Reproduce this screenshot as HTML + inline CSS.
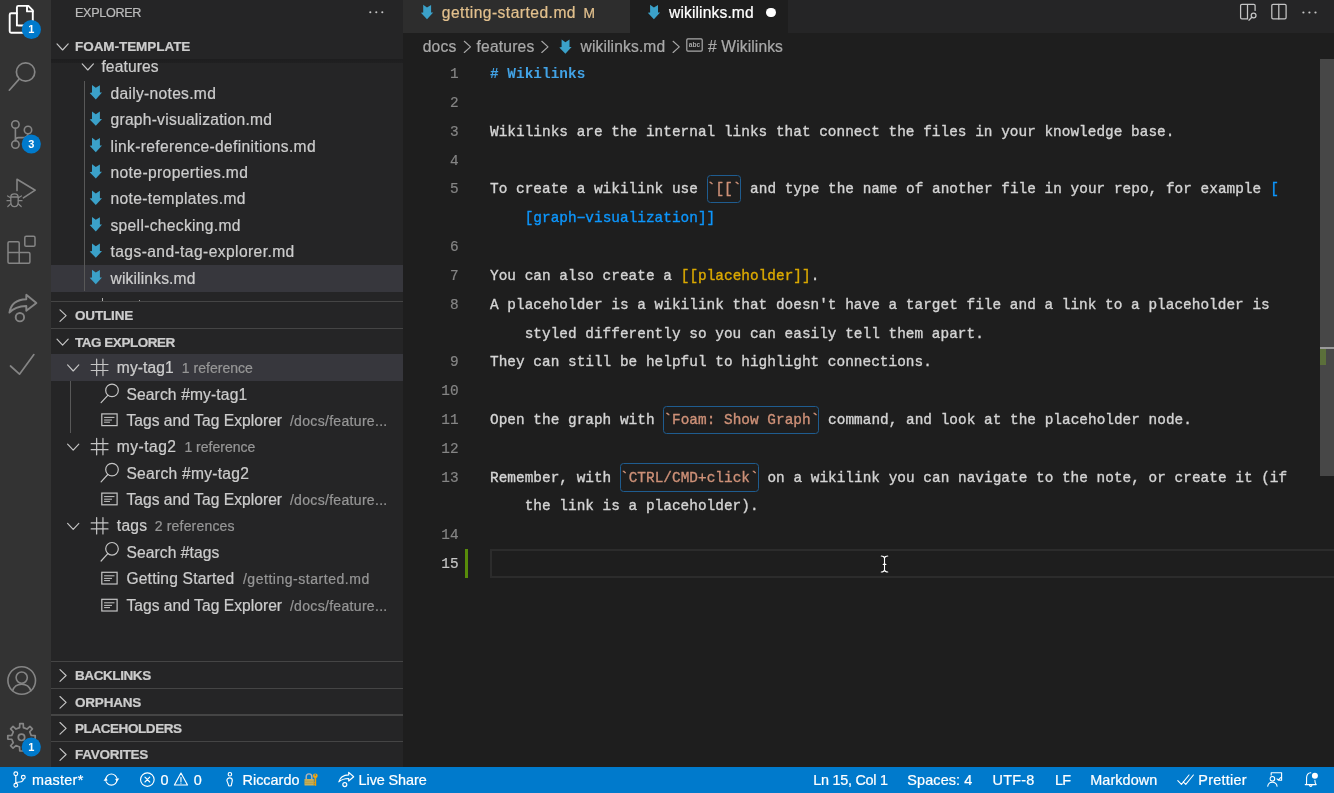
<!DOCTYPE html>
<html><head><meta charset="utf-8"><title>wikilinks.md - foam-template</title>
<style>
html,body{margin:0;padding:0;background:#1e1e1e;}
body{width:1334px;height:793px;overflow:hidden;position:relative;font-family:"Liberation Sans",sans-serif;}
.r{position:absolute;}
.t{position:absolute;white-space:pre;-webkit-text-stroke:0.22px currentColor;}
.ln{position:absolute;left:420px;width:38.6px;text-align:right;font:400 14.4px/28.8px "Liberation Mono",monospace;white-space:pre;-webkit-text-stroke:0.2px currentColor;}
.cl{position:absolute;font:400 14.4px/28.8px "Liberation Mono",monospace;white-space:pre;letter-spacing:0.0276px;-webkit-text-stroke:0.35px currentColor;}
#clipA{position:absolute;left:51px;top:59px;width:352px;height:242.2px;overflow:hidden;}
#tx{position:absolute;left:0;top:0;width:1334px;height:793px;will-change:transform;}
svg{position:absolute;left:0;top:0;overflow:visible;}
</style></head>
<body>
<div class="r" style="left:0px;top:0px;width:51px;height:767px;background:#333333;"></div>
<div class="r" style="left:51px;top:0px;width:352px;height:767px;background:#252526;"></div>
<div class="r" style="left:403px;top:0px;width:931px;height:32.6px;background:#252526;"></div>
<div class="r" style="left:403px;top:32.6px;width:931px;height:734.4px;background:#1e1e1e;"></div>
<div class="r" style="left:0px;top:766.8px;width:1334px;height:26.2px;background:#007acc;"></div>
<div class="r" style="left:51px;top:265.4px;width:352px;height:26.4px;background:#37373d;"></div>
<div class="r" style="left:84px;top:80.6px;width:1px;height:210.6px;background:#585858;"></div>
<div class="r" style="left:51px;top:32.6px;width:352px;height:26.4px;background:#252526;"></div>
<div class="r" style="left:51px;top:59px;width:352px;height:3.7px;background:linear-gradient(#1e1e1f,#202021);"></div>
<div class="r" style="left:102.2px;top:298.3px;width:1.2px;height:3px;background:#b0b0b0;"></div>
<div class="r" style="left:139px;top:299.9px;width:1.2px;height:1.4px;background:#a0a0a0;"></div>
<div class="r" style="left:51px;top:301.2px;width:352px;height:27.3px;background:#252526;"></div>
<div class="r" style="left:51px;top:301.09999999999997px;width:352px;height:1.2px;background:#454545;"></div>
<div class="r" style="left:51px;top:328.4px;width:352px;height:25.9px;background:#252526;"></div>
<div class="r" style="left:51px;top:328.29999999999995px;width:352px;height:1.2px;background:#454545;"></div>
<div class="r" style="left:51px;top:354.2px;width:352px;height:26.4px;background:#37373d;"></div>
<div class="r" style="left:70px;top:380.6px;width:1px;height:52px;background:#585858;"></div>
<div class="r" style="left:51px;top:661.3px;width:352px;height:27.2px;background:#252526;"></div>
<div class="r" style="left:51px;top:661.1999999999999px;width:352px;height:1.2px;background:#454545;"></div>
<div class="r" style="left:51px;top:688.4px;width:352px;height:26.2px;background:#252526;"></div>
<div class="r" style="left:51px;top:688.3px;width:352px;height:1.2px;background:#454545;"></div>
<div class="r" style="left:51px;top:714.5px;width:352px;height:26.6px;background:#252526;"></div>
<div class="r" style="left:51px;top:714.4px;width:352px;height:1.2px;background:#454545;"></div>
<div class="r" style="left:51px;top:741.0px;width:352px;height:26px;background:#252526;"></div>
<div class="r" style="left:51px;top:740.9px;width:352px;height:1.2px;background:#454545;"></div>
<div class="r" style="left:403px;top:0px;width:227px;height:32.6px;background:#2d2d2d;"></div>
<div class="r" style="left:630px;top:0px;width:157.5px;height:32.6px;background:#1e1e1e;"></div>
<div class="r" style="left:766.2px;top:7.5px;width:9.8px;height:9.8px;border-radius:50%;background:#fff"></div>
<div id="tx">
<div class="ln" style="top:60.00px;color:#858585">1</div>
<div class="cl" style="left:490.00px;top:60.00px;color:#42a3e6;font-weight:700;-webkit-text-stroke:0;"># Wikilinks</div>
<div class="ln" style="top:89.00px;color:#858585">2</div>
<div class="ln" style="top:118.00px;color:#858585">3</div>
<div class="cl" style="left:490.00px;top:118.00px;color:#d4d4d4;font-weight:400;">Wikilinks are the internal links that connect the files in your knowledge base.</div>
<div class="ln" style="top:147.00px;color:#858585">4</div>
<div class="ln" style="top:175.00px;color:#858585">5</div>
<div class="cl" style="left:490.00px;top:175.00px;color:#d4d4d4;font-weight:400;">To create a wikilink use </div>
<div class="r" style="left:706.73px;top:175.18px;width:34.68px;height:28.22px;border:1.2px solid #1f5c8f;border-radius:3.5px;box-sizing:border-box"></div>
<div class="cl" style="left:706.73px;top:175.00px;color:#ce9178;font-weight:400;">`[[`</div>
<div class="cl" style="left:741.40px;top:175.00px;color:#d4d4d4;font-weight:400;"> and type the name of another file in your repo, for example </div>
<div class="cl" style="left:1270.21px;top:175.00px;color:#0d96fc;font-weight:400;">[</div>
<div class="cl" style="left:524.68px;top:204.00px;color:#0d96fc;font-weight:400;">[graph−visualization]]</div>
<div class="ln" style="top:233.00px;color:#858585">6</div>
<div class="ln" style="top:262.00px;color:#858585">7</div>
<div class="cl" style="left:490.00px;top:262.00px;color:#d4d4d4;font-weight:400;">You can also create a </div>
<div class="cl" style="left:680.72px;top:262.00px;color:#dba900;font-weight:400;">[[placeholder]]</div>
<div class="cl" style="left:810.75px;top:262.00px;color:#d4d4d4;font-weight:400;">.</div>
<div class="ln" style="top:291.00px;color:#858585">8</div>
<div class="cl" style="left:490.00px;top:291.00px;color:#d4d4d4;font-weight:400;">A placeholder is a wikilink that doesn&#x27;t have a target file and a link to a placeholder is</div>
<div class="cl" style="left:490.00px;top:320.00px;color:#d4d4d4;font-weight:400;">    styled differently so you can easily tell them apart.</div>
<div class="ln" style="top:348.00px;color:#858585">9</div>
<div class="cl" style="left:490.00px;top:348.00px;color:#d4d4d4;font-weight:400;">They can still be helpful to highlight connections.</div>
<div class="ln" style="top:377.00px;color:#858585">10</div>
<div class="ln" style="top:406.00px;color:#858585">11</div>
<div class="cl" style="left:490.00px;top:406.00px;color:#d4d4d4;font-weight:400;">Open the graph with </div>
<div class="r" style="left:663.38px;top:405.74px;width:156.04px;height:28.22px;border:1.2px solid #1f5c8f;border-radius:3.5px;box-sizing:border-box"></div>
<div class="cl" style="left:663.38px;top:406.00px;color:#ce9178;font-weight:400;">`Foam: Show Graph`</div>
<div class="cl" style="left:819.42px;top:406.00px;color:#d4d4d4;font-weight:400;"> command, and look at the placeholder node.</div>
<div class="ln" style="top:435.00px;color:#858585">12</div>
<div class="ln" style="top:464.00px;color:#858585">13</div>
<div class="cl" style="left:490.00px;top:464.00px;color:#d4d4d4;font-weight:400;">Remember, with </div>
<div class="r" style="left:620.03px;top:463.38px;width:138.70px;height:28.22px;border:1.2px solid #1f5c8f;border-radius:3.5px;box-sizing:border-box"></div>
<div class="cl" style="left:620.03px;top:464.00px;color:#ce9178;font-weight:400;">`CTRL/CMD+click`</div>
<div class="cl" style="left:758.74px;top:464.00px;color:#d4d4d4;font-weight:400;"> on a wikilink you can navigate to the note, or create it (if</div>
<div class="cl" style="left:490.00px;top:492.00px;color:#d4d4d4;font-weight:400;">    the link is a placeholder).</div>
<div class="ln" style="top:521.00px;color:#858585">14</div>
<div class="ln" style="top:550.00px;color:#c6c6c6">15</div>
<div class="r" style="left:490px;top:549.00px;width:850px;height:28.9px;border:2px solid #2c2c2c;box-sizing:border-box"></div>
<div class="r" style="left:465px;top:548.70px;width:3.2px;height:29.22px;background:#588c0a"></div>
<div class="r" style="left:1320.4px;top:58.8px;width:14px;height:417px;background:#474747"></div>
<div class="r" style="left:1320.4px;top:346.6px;width:14px;height:2px;background:#9a9a9a"></div>
<div class="r" style="left:1320.4px;top:349px;width:5.6px;height:16.2px;background:#5b6f3a"></div>
<span class="t" style="left:75.00px;top:5px;font:400 12.6px/17.6px 'Liberation Sans';color:#bbbbbb;letter-spacing:-0.312px;">EXPLORER</span>
<span class="t" style="left:101.40px;top:56px;font:400 15.6px/21.8px 'Liberation Sans';color:#ccc;letter-spacing:0.130px;">features</span>
<span class="t" style="left:110.50px;top:83px;font:400 15.6px/21.8px 'Liberation Sans';color:#ccc;letter-spacing:0.300px;">daily-notes.md</span>
<span class="t" style="left:110.50px;top:109px;font:400 15.6px/21.8px 'Liberation Sans';color:#ccc;letter-spacing:0.258px;">graph-visualization.md</span>
<span class="t" style="left:110.50px;top:136px;font:400 15.6px/21.8px 'Liberation Sans';color:#ccc;letter-spacing:0.328px;">link-reference-definitions.md</span>
<span class="t" style="left:110.50px;top:162px;font:400 15.6px/21.8px 'Liberation Sans';color:#ccc;letter-spacing:0.384px;">note-properties.md</span>
<span class="t" style="left:110.50px;top:188px;font:400 15.6px/21.8px 'Liberation Sans';color:#ccc;letter-spacing:0.361px;">note-templates.md</span>
<span class="t" style="left:110.50px;top:215px;font:400 15.6px/21.8px 'Liberation Sans';color:#ccc;letter-spacing:0.323px;">spell-checking.md</span>
<span class="t" style="left:110.50px;top:241px;font:400 15.6px/21.8px 'Liberation Sans';color:#ccc;letter-spacing:0.416px;">tags-and-tag-explorer.md</span>
<span class="t" style="left:110.50px;top:268px;font:400 15.6px/21.8px 'Liberation Sans';color:#ccc;letter-spacing:0.159px;">wikilinks.md</span>
<span class="t" style="left:75.00px;top:38px;font:700 13.5px/18.9px 'Liberation Sans';color:#cccccc;letter-spacing:-0.053px;">FOAM-TEMPLATE</span>
<span class="t" style="left:75.00px;top:307px;font:700 13.5px/18.9px 'Liberation Sans';color:#cccccc;letter-spacing:-0.164px;">OUTLINE</span>
<span class="t" style="left:75.00px;top:334px;font:700 13.5px/18.9px 'Liberation Sans';color:#cccccc;letter-spacing:-0.476px;">TAG EXPLORER</span>
<span class="t" style="left:116.80px;top:357px;font:400 15.6px/21.8px 'Liberation Sans';color:#ccc;letter-spacing:0.108px;">my-tag1</span>
<span class="t" style="left:181.80px;top:359px;font:400 14.04px/19.7px 'Liberation Sans';color:#969696;letter-spacing:0.011px;">1 reference</span>
<span class="t" style="left:126.40px;top:384px;font:400 15.6px/21.8px 'Liberation Sans';color:#ccc;letter-spacing:0.143px;">Search #my-tag1</span>
<span class="t" style="left:126.40px;top:410px;font:400 15.6px/21.8px 'Liberation Sans';color:#ccc;letter-spacing:0.039px;">Tags and Tag Explorer</span>
<span class="t" style="left:289.90px;top:412px;font:400 14.04px/19.7px 'Liberation Sans';color:#969696;letter-spacing:0.304px;">/docs/feature...</span>
<span class="t" style="left:116.80px;top:436px;font:400 15.6px/21.8px 'Liberation Sans';color:#ccc;letter-spacing:0.479px;">my-tag2</span>
<span class="t" style="left:184.40px;top:438px;font:400 14.04px/19.7px 'Liberation Sans';color:#969696;letter-spacing:0.001px;">1 reference</span>
<span class="t" style="left:126.40px;top:463px;font:400 15.6px/21.8px 'Liberation Sans';color:#ccc;letter-spacing:0.263px;">Search #my-tag2</span>
<span class="t" style="left:126.40px;top:489px;font:400 15.6px/21.8px 'Liberation Sans';color:#ccc;letter-spacing:0.039px;">Tags and Tag Explorer</span>
<span class="t" style="left:289.90px;top:491px;font:400 14.04px/19.7px 'Liberation Sans';color:#969696;letter-spacing:0.304px;">/docs/feature...</span>
<span class="t" style="left:116.80px;top:515px;font:400 15.6px/21.8px 'Liberation Sans';color:#ccc;letter-spacing:0.254px;">tags</span>
<span class="t" style="left:154.70px;top:517px;font:400 14.04px/19.7px 'Liberation Sans';color:#969696;letter-spacing:0.175px;">2 references</span>
<span class="t" style="left:126.40px;top:542px;font:400 15.6px/21.8px 'Liberation Sans';color:#ccc;letter-spacing:0.101px;">Search #tags</span>
<span class="t" style="left:126.40px;top:568px;font:400 15.6px/21.8px 'Liberation Sans';color:#ccc;letter-spacing:0.201px;">Getting Started</span>
<span class="t" style="left:242.90px;top:570px;font:400 14.04px/19.7px 'Liberation Sans';color:#969696;letter-spacing:0.522px;">/getting-started.md</span>
<span class="t" style="left:126.40px;top:595px;font:400 15.6px/21.8px 'Liberation Sans';color:#ccc;letter-spacing:0.039px;">Tags and Tag Explorer</span>
<span class="t" style="left:289.90px;top:597px;font:400 14.04px/19.7px 'Liberation Sans';color:#969696;letter-spacing:0.304px;">/docs/feature...</span>
<span class="t" style="left:75.00px;top:667px;font:700 13.5px/18.9px 'Liberation Sans';color:#cccccc;letter-spacing:-0.411px;">BACKLINKS</span>
<span class="t" style="left:75.00px;top:694px;font:700 13.5px/18.9px 'Liberation Sans';color:#cccccc;letter-spacing:-0.202px;">ORPHANS</span>
<span class="t" style="left:75.00px;top:720px;font:700 13.5px/18.9px 'Liberation Sans';color:#cccccc;letter-spacing:-0.430px;">PLACEHOLDERS</span>
<span class="t" style="left:75.00px;top:746px;font:700 13.5px/18.9px 'Liberation Sans';color:#cccccc;letter-spacing:-0.268px;">FAVORITES</span>
<span class="t" style="left:441.80px;top:2px;font:400 15.6px/21.8px 'Liberation Sans';color:#e2c08d;letter-spacing:0.473px;">getting-started.md</span>
<span class="t" style="left:583.40px;top:4px;font:400 13.8px/19.3px 'Liberation Sans';color:#e2c08d;letter-spacing:-0.200px;">M</span>
<span class="t" style="left:669.00px;top:2px;font:400 15.6px/21.8px 'Liberation Sans';color:#ffffff;letter-spacing:0.134px;">wikilinks.md</span>
<span class="t" style="left:422.70px;top:36px;font:400 15.6px/21.8px 'Liberation Sans';color:#a9a9a9;letter-spacing:0.187px;">docs</span>
<span class="t" style="left:476.60px;top:36px;font:400 15.6px/21.8px 'Liberation Sans';color:#a9a9a9;letter-spacing:0.180px;">features</span>
<span class="t" style="left:580.50px;top:36px;font:400 15.6px/21.8px 'Liberation Sans';color:#a9a9a9;letter-spacing:0.134px;">wikilinks.md</span>
<span class="t" style="left:708.10px;top:36px;font:400 15.6px/21.8px 'Liberation Sans';color:#a9a9a9;letter-spacing:0.113px;"># Wikilinks</span>
<span class="t" style="left:31.90px;top:770px;font:400 14.4px/20.2px 'Liberation Sans';color:#fff;letter-spacing:0.301px;">master*</span>
<span class="t" style="left:160.40px;top:770px;font:400 14.4px/20.2px 'Liberation Sans';color:#fff;letter-spacing:-0.416px;">0</span>
<span class="t" style="left:193.80px;top:770px;font:400 14.4px/20.2px 'Liberation Sans';color:#fff;letter-spacing:-0.416px;">0</span>
<span class="t" style="left:242.50px;top:770px;font:400 14.4px/20.2px 'Liberation Sans';color:#fff;letter-spacing:0.025px;">Riccardo</span>
<span class="t" style="left:358.60px;top:770px;font:400 14.4px/20.2px 'Liberation Sans';color:#fff;letter-spacing:-0.081px;">Live Share</span>
<span class="t" style="left:813.20px;top:770px;font:400 14.4px/20.2px 'Liberation Sans';color:#fff;letter-spacing:-0.259px;">Ln 15, Col 1</span>
<span class="t" style="left:907.30px;top:770px;font:400 14.4px/20.2px 'Liberation Sans';color:#fff;letter-spacing:0.133px;">Spaces: 4</span>
<span class="t" style="left:992.60px;top:770px;font:400 14.4px/20.2px 'Liberation Sans';color:#fff;letter-spacing:0.244px;">UTF-8</span>
<span class="t" style="left:1055.00px;top:770px;font:400 14.4px/20.2px 'Liberation Sans';color:#fff;letter-spacing:-0.798px;">LF</span>
<span class="t" style="left:1090.20px;top:770px;font:400 14.4px/20.2px 'Liberation Sans';color:#fff;letter-spacing:0.114px;">Markdown</span>
<span class="t" style="left:1198.30px;top:770px;font:400 14.4px/20.2px 'Liberation Sans';color:#fff;letter-spacing:0.264px;">Prettier</span>
</div>
<svg width="1334" height="793" viewBox="0 0 1334 793"><path d="M16.9 25.5 V7.4 Q16.9 5.9 18.4 5.9 H28.4 L32.8 10.4 V24 Q32.8 25.5 31.3 25.5 H18.4 Q16.9 25.5 16.9 24" stroke="#ffffff" stroke-width="1.9" fill="none" stroke-linecap="round" stroke-linejoin="round" stroke-linecap="butt"/>
<path d="M27 5.9 V11.4 H32.8" stroke="#ffffff" stroke-width="1.9" fill="none" stroke-linecap="round" stroke-linejoin="round" />
<path d="M16.9 13.2 H11.2 Q9.7 13.2 9.7 14.7 V31.3 Q9.7 32.8 11.2 32.8 H25 Q26.5 32.8 26.5 31.3 V25.5" stroke="#ffffff" stroke-width="1.9" fill="none" stroke-linecap="round" stroke-linejoin="round" />
<circle cx="31.4" cy="29.5" r="9.6" fill="#007acc"/>
<text x="31.4" y="33.4" text-anchor="middle" font-family="Liberation Sans" font-weight="700" font-size="11" fill="#fff">1</text>
<circle cx="25.6" cy="72" r="9.2" stroke="#858585" stroke-width="1.7" fill="none"/>
<path d="M18.9 79.4 L9.3 90.2" stroke="#858585" stroke-width="1.7" fill="none" stroke-linecap="round" stroke-linejoin="round" />
<circle cx="15.4" cy="124.5" r="3.7" stroke="#858585" stroke-width="1.6" fill="none"/>
<circle cx="28" cy="130" r="3.7" stroke="#858585" stroke-width="1.6" fill="none"/>
<circle cx="15.4" cy="144.5" r="3.7" stroke="#858585" stroke-width="1.6" fill="none"/>
<path d="M15.4 128.2 V140.8" stroke="#858585" stroke-width="1.6" fill="none" stroke-linecap="round" stroke-linejoin="round" />
<path d="M28 133.7 Q28 137.6 22 137.6 H18.5 Q15.4 137.6 15.4 140.5" stroke="#858585" stroke-width="1.6" fill="none" stroke-linecap="round" stroke-linejoin="round" />
<circle cx="31.3" cy="144" r="9.6" fill="#007acc"/>
<text x="31.3" y="147.9" text-anchor="middle" font-family="Liberation Sans" font-weight="700" font-size="11" fill="#fff">3</text>
<path d="M17 190.6 V179.2 L35.2 190.2 L23.4 197.9" stroke="#858585" stroke-width="1.6" fill="none" stroke-linecap="round" stroke-linejoin="round" />
<path d="M10.7 197 H18.3 M10.8 199.5 V202 Q10.8 206.7 14.5 206.7 Q18.2 206.7 18.2 202 V197 Q18.2 193.8 14.5 193.8 Q10.8 193.8 10.8 197 Z" stroke="#858585" stroke-width="1.3" fill="none" stroke-linecap="round" stroke-linejoin="round" />
<path d="M7.6 195.9 L10.6 197.8 M7 200.7 H10.7 M7.8 206.5 L10.8 203.8 M21.4 195.9 L18.4 197.8 M22 200.7 H18.3 M21.2 206.5 L18.2 203.8" stroke="#858585" stroke-width="1.2" fill="none" stroke-linecap="round" stroke-linejoin="round" />
<rect x="24.8" y="236.3" width="10.2" height="10" rx="1.4" stroke="#858585" stroke-width="1.5" fill="none"/>
<path d="M8 242.9 Q8 241.7 9.2 241.7 H18 Q19.2 241.7 19.2 242.9 V252.6 H28.7 Q29.9 252.6 29.9 253.8 V262 Q29.9 263.2 28.7 263.2 H9.2 Q8 263.2 8 262 Z M8 252.6 H19.2 V263.2" stroke="#858585" stroke-width="1.5" fill="none" stroke-linecap="round" stroke-linejoin="round" />
<path d="M36.4 303 L26.3 294.8 V299.2 Q11.5 299.5 9.4 312.6 Q15 306.3 26.3 306 V310.8 Z" stroke="#858585" stroke-width="1.9" fill="none" stroke-linecap="round" stroke-linejoin="round" />
<circle cx="19.9" cy="317.2" r="4.2" stroke="#858585" stroke-width="1.9" fill="none"/>
<path d="M10.5 366 L19.5 374.2 L33.9 354.6" stroke="#858585" stroke-width="1.7" fill="none" stroke-linecap="round" stroke-linejoin="round" />
<circle cx="21.7" cy="680.5" r="13.8" stroke="#858585" stroke-width="1.6" fill="none"/>
<circle cx="21.7" cy="677.6" r="5.6" stroke="#858585" stroke-width="1.6" fill="none"/>
<path d="M12.6 690.8 Q14.5 684.2 21.7 684.2 Q28.9 684.2 30.8 690.8" stroke="#858585" stroke-width="1.6" fill="none" stroke-linecap="round" stroke-linejoin="round" />
<path d="M19.57 727.59 L19.77 723.61 L23.23 723.61 L23.43 727.59 L27.00 729.07 L29.96 726.40 L32.40 728.84 L29.73 731.80 L31.21 735.37 L35.19 735.57 L35.19 739.03 L31.21 739.23 L29.73 742.80 L32.40 745.76 L29.96 748.20 L27.00 745.53 L23.43 747.01 L23.23 750.99 L19.77 750.99 L19.57 747.01 L16.00 745.53 L13.04 748.20 L10.60 745.76 L13.27 742.80 L11.79 739.23 L7.81 739.03 L7.81 735.57 L11.79 735.37 L13.27 731.80 L10.60 728.84 L13.04 726.40 L16.00 729.07 Z" stroke="#858585" stroke-width="1.7" fill="none" stroke-linecap="round" stroke-linejoin="round" />
<circle cx="21.5" cy="737.3" r="3.2" stroke="#858585" stroke-width="1.7" fill="none"/>
<circle cx="31.3" cy="747" r="9.6" fill="#007acc"/>
<text x="31.3" y="750.9" text-anchor="middle" font-family="Liberation Sans" font-weight="700" font-size="11" fill="#fff">1</text>
<circle cx="370.3" cy="12.3" r="1.05" stroke="none" stroke-width="0" fill="#c5c5c5"/>
<circle cx="376.3" cy="12.3" r="1.05" stroke="none" stroke-width="0" fill="#c5c5c5"/>
<circle cx="382.3" cy="12.3" r="1.05" stroke="none" stroke-width="0" fill="#c5c5c5"/>
<path d="M57.0 43.9 L62.6 50.0 L68.2 43.9" stroke="#c5c5c5" stroke-width="1.15" fill="none" stroke-linecap="round" stroke-linejoin="round" />
<path d="M82.2 63.900000000000006 L87.8 70.0 L93.39999999999999 63.900000000000006" stroke="#c5c5c5" stroke-width="1.15" fill="none" stroke-linecap="round" stroke-linejoin="round" />
<path d="M60 309.8 L66.1 315.6 L60 321.40000000000003" stroke="#c5c5c5" stroke-width="1.15" fill="none" stroke-linecap="round" stroke-linejoin="round" />
<path d="M57.0 339.1 L62.6 345.20000000000005 L68.2 339.1" stroke="#c5c5c5" stroke-width="1.15" fill="none" stroke-linecap="round" stroke-linejoin="round" />
<path d="M60 669.7 L66.1 675.5 L60 681.3" stroke="#c5c5c5" stroke-width="1.15" fill="none" stroke-linecap="round" stroke-linejoin="round" />
<path d="M60 696.5 L66.1 702.3 L60 708.0999999999999" stroke="#c5c5c5" stroke-width="1.15" fill="none" stroke-linecap="round" stroke-linejoin="round" />
<path d="M60 722.5 L66.1 728.3 L60 734.0999999999999" stroke="#c5c5c5" stroke-width="1.15" fill="none" stroke-linecap="round" stroke-linejoin="round" />
<path d="M60 748.7 L66.1 754.5 L60 760.3" stroke="#c5c5c5" stroke-width="1.15" fill="none" stroke-linecap="round" stroke-linejoin="round" />
<polygon points="92.00,85.00 95.80,87.80 99.90,85.20 99.90,92.60 102.00,92.60 95.80,99.40 89.70,93.00 92.00,92.60" fill="#3ba1c9"/>
<polygon points="92.00,111.40 95.80,114.20 99.90,111.60 99.90,119.00 102.00,119.00 95.80,125.80 89.70,119.40 92.00,119.00" fill="#3ba1c9"/>
<polygon points="92.00,137.80 95.80,140.60 99.90,138.00 99.90,145.40 102.00,145.40 95.80,152.20 89.70,145.80 92.00,145.40" fill="#3ba1c9"/>
<polygon points="92.00,164.20 95.80,167.00 99.90,164.40 99.90,171.80 102.00,171.80 95.80,178.60 89.70,172.20 92.00,171.80" fill="#3ba1c9"/>
<polygon points="92.00,190.60 95.80,193.40 99.90,190.80 99.90,198.20 102.00,198.20 95.80,205.00 89.70,198.60 92.00,198.20" fill="#3ba1c9"/>
<polygon points="92.00,217.00 95.80,219.80 99.90,217.20 99.90,224.60 102.00,224.60 95.80,231.40 89.70,225.00 92.00,224.60" fill="#3ba1c9"/>
<polygon points="92.00,243.40 95.80,246.20 99.90,243.60 99.90,251.00 102.00,251.00 95.80,257.80 89.70,251.40 92.00,251.00" fill="#3ba1c9"/>
<polygon points="92.00,269.80 95.80,272.60 99.90,270.00 99.90,277.40 102.00,277.40 95.80,284.20 89.70,277.80 92.00,277.40" fill="#3ba1c9"/>
<path d="M67.60000000000001 364.9 L73.2 371.0 L78.8 364.9" stroke="#c5c5c5" stroke-width="1.15" fill="none" stroke-linecap="round" stroke-linejoin="round" />
<path d="M96.64999999999999 359.2 V375.59999999999997 M102.94999999999999 359.2 V375.59999999999997 M91.19999999999999 364.5 H108.0 M91.19999999999999 370.5 H108.0" stroke="#c5c5c5" stroke-width="1.2" fill="none" stroke-linecap="round" stroke-linejoin="round" />
<path d="M67.60000000000001 444.09999999999997 L73.2 450.2 L78.8 444.09999999999997" stroke="#c5c5c5" stroke-width="1.15" fill="none" stroke-linecap="round" stroke-linejoin="round" />
<path d="M96.64999999999999 438.4 V454.79999999999995 M102.94999999999999 438.4 V454.79999999999995 M91.19999999999999 443.7 H108.0 M91.19999999999999 449.7 H108.0" stroke="#c5c5c5" stroke-width="1.2" fill="none" stroke-linecap="round" stroke-linejoin="round" />
<path d="M67.60000000000001 523.3 L73.2 529.4 L78.8 523.3" stroke="#c5c5c5" stroke-width="1.15" fill="none" stroke-linecap="round" stroke-linejoin="round" />
<path d="M96.64999999999999 517.5999999999999 V534.0 M102.94999999999999 517.5999999999999 V534.0 M91.19999999999999 522.9 H108.0 M91.19999999999999 528.9 H108.0" stroke="#c5c5c5" stroke-width="1.2" fill="none" stroke-linecap="round" stroke-linejoin="round" />
<circle cx="112.0" cy="390.4" r="6.3" stroke="#c5c5c5" stroke-width="1.2" fill="none"/>
<path d="M107.80000000000001 395.29999999999995 L101.10000000000001 402.59999999999997" stroke="#c5c5c5" stroke-width="1.2" fill="none" stroke-linecap="round" stroke-linejoin="round" />
<circle cx="112.0" cy="469.59999999999997" r="6.3" stroke="#c5c5c5" stroke-width="1.2" fill="none"/>
<path d="M107.80000000000001 474.49999999999994 L101.10000000000001 481.79999999999995" stroke="#c5c5c5" stroke-width="1.2" fill="none" stroke-linecap="round" stroke-linejoin="round" />
<circle cx="112.0" cy="548.8000000000001" r="6.3" stroke="#c5c5c5" stroke-width="1.2" fill="none"/>
<path d="M107.80000000000001 553.7 L101.10000000000001 561.0000000000001" stroke="#c5c5c5" stroke-width="1.2" fill="none" stroke-linecap="round" stroke-linejoin="round" />
<rect x="101.8" y="413.90000000000003" width="15.3" height="11.7" stroke="#c5c5c5" stroke-width="1.2" fill="none"/>
<path d="M104.5 417.40000000000003 H114.1 M104.5 420.0 H111.6 M104.5 422.2 H109.6" stroke="#c5c5c5" stroke-width="1.0" fill="none" stroke-linecap="round" stroke-linejoin="round" />
<rect x="101.8" y="493.1" width="15.3" height="11.7" stroke="#c5c5c5" stroke-width="1.2" fill="none"/>
<path d="M104.5 496.6 H114.1 M104.5 499.2 H111.6 M104.5 501.4 H109.6" stroke="#c5c5c5" stroke-width="1.0" fill="none" stroke-linecap="round" stroke-linejoin="round" />
<rect x="101.8" y="572.3000000000001" width="15.3" height="11.7" stroke="#c5c5c5" stroke-width="1.2" fill="none"/>
<path d="M104.5 575.8000000000001 H114.1 M104.5 578.4000000000001 H111.6 M104.5 580.6 H109.6" stroke="#c5c5c5" stroke-width="1.0" fill="none" stroke-linecap="round" stroke-linejoin="round" />
<rect x="101.8" y="599.3000000000001" width="15.3" height="11.7" stroke="#c5c5c5" stroke-width="1.2" fill="none"/>
<path d="M104.5 602.8000000000001 H114.1 M104.5 605.4000000000001 H111.6 M104.5 607.6 H109.6" stroke="#c5c5c5" stroke-width="1.0" fill="none" stroke-linecap="round" stroke-linejoin="round" />
<polygon points="423.20,4.80 427.00,7.60 431.10,5.00 431.10,12.40 433.20,12.40 427.00,19.20 420.90,12.80 423.20,12.40" fill="#3ba1c9"/>
<polygon points="650.10,4.80 653.90,7.60 658.00,5.00 658.00,12.40 660.10,12.40 653.90,19.20 647.80,12.80 650.10,12.40" fill="#3ba1c9"/>
<polygon points="561.60,39.40 565.40,42.20 569.50,39.60 569.50,47.00 571.60,47.00 565.40,53.80 559.30,47.40 561.60,47.00" fill="#3ba1c9"/>
<path d="M1247.5 4.3 V18.9 M1255.1 10.4 V5.6 Q1255.1 4.3 1253.8 4.3 H1241.9 Q1240.6 4.3 1240.6 5.6 V17.6 Q1240.6 18.9 1241.9 18.9 H1247.5" stroke="#c5c5c5" stroke-width="1.25" fill="none" stroke-linecap="round" stroke-linejoin="round" />
<circle cx="1253.6" cy="15.4" r="2.4" stroke="#c5c5c5" stroke-width="1.25" fill="none"/>
<path d="M1251.8 17.2 L1248.9 20.2" stroke="#c5c5c5" stroke-width="1.25" fill="none" stroke-linecap="round" stroke-linejoin="round" />
<rect x="1271.8" y="4.3" width="14.3" height="14.6" rx="1.3" stroke="#c5c5c5" stroke-width="1.25" fill="none"/>
<path d="M1278.8 4.3 V18.9" stroke="#c5c5c5" stroke-width="1.25" fill="none" stroke-linecap="round" stroke-linejoin="round" />
<circle cx="1303.4" cy="12.5" r="1.1" stroke="none" stroke-width="0" fill="#c5c5c5"/>
<circle cx="1309.4" cy="12.5" r="1.1" stroke="none" stroke-width="0" fill="#c5c5c5"/>
<circle cx="1315.5" cy="12.5" r="1.1" stroke="none" stroke-width="0" fill="#c5c5c5"/>
<path d="M464.3 41.3 L470.5 46.9 L464.3 52.5" stroke="#a9a9a9" stroke-width="1.15" fill="none" stroke-linecap="round" stroke-linejoin="round" />
<path d="M541.8 41.3 L548.0 46.9 L541.8 52.5" stroke="#a9a9a9" stroke-width="1.15" fill="none" stroke-linecap="round" stroke-linejoin="round" />
<path d="M673.1 41.3 L679.3000000000001 46.9 L673.1 52.5" stroke="#a9a9a9" stroke-width="1.15" fill="none" stroke-linecap="round" stroke-linejoin="round" />
<rect x="686.8" y="38.9" width="15.4" height="12.2" rx="1" stroke="#a9a9a9" stroke-width="1.2" fill="none"/>
<text x="694.5" y="47.3" text-anchor="middle" font-family="Liberation Sans" font-size="6.6" font-weight="700" fill="#a9a9a9">abc</text>
<circle cx="15.8" cy="773.7" r="1.9" stroke="#ffffff" stroke-width="1.15" fill="none"/>
<circle cx="15.8" cy="785.2" r="1.9" stroke="#ffffff" stroke-width="1.15" fill="none"/>
<circle cx="23.3" cy="777.2" r="1.9" stroke="#ffffff" stroke-width="1.15" fill="none"/>
<path d="M15.8 775.6 V783.3 M23.3 779.1 Q23.3 782 19.8 782 Q15.8 782 15.8 783.3" stroke="#ffffff" stroke-width="1.15" fill="none" stroke-linecap="round" stroke-linejoin="round" />
<path d="M105.80000000000001 779.6 A5.6 5.6 0 0 1 117.0 779.6 M117.0 779.6 A5.6 5.6 0 0 1 105.80000000000001 779.6" stroke="#ffffff" stroke-width="1.15" fill="none" stroke-linecap="round" stroke-linejoin="round" />
<path d="M114.7 778.4 H119.3 L117.0 781.4 Z M103.50000000000001 780.8000000000001 H108.10000000000001 L105.80000000000001 777.8000000000001 Z" fill="#fff"/>
<path d="M114.4 776.2 L116.8 778.2 L113.4 779.4 Z M108.4 783.0 L106.00000000000001 781.0 L109.4 779.8000000000001 Z" fill="#007acc"/>
<circle cx="147.35" cy="779.6" r="6.8" stroke="#ffffff" stroke-width="1.15" fill="none"/>
<path d="M144.95 777.2 L149.75 782 M149.75 777.2 L144.95 782" stroke="#ffffff" stroke-width="1.15" fill="none" stroke-linecap="round" stroke-linejoin="round" />
<path d="M180.95 773 L187.5 785 H174.4 Z M180.95 777.4 V781.4" stroke="#ffffff" stroke-width="1.15" fill="none" stroke-linecap="round" stroke-linejoin="round" />
<circle cx="180.95" cy="783.1" r="0.7" stroke="none" stroke-width="0" fill="#ffffff"/>
<circle cx="229.9" cy="774.2" r="1.75" stroke="#ffffff" stroke-width="1.15" fill="none"/>
<path d="M226.9 780.6 A2.7 2.7 0 0 1 232.3 780.6 L231.5 784.4 A1.6 1.6 0 0 1 228.3 784.4 Z" stroke="#ffffff" stroke-width="1.15" fill="none" stroke-linecap="round" stroke-linejoin="round" />
<path d="M306.2 779.3 V776.8 Q306.2 773.9 309 773.9 Q311.8 773.9 311.8 776.8 V779.3" stroke="#b5b5b5" stroke-width="1.4" fill="none"/>
<rect x="304.5" y="779" width="9.4" height="6.6" rx="0.6" fill="#c9b15c"/><path d="M304.5 781.2 H313.9 M304.5 783.3 H313.9" stroke="#a8903c" stroke-width="0.6"/>
<circle cx="315.3" cy="775.8" r="2.4" fill="#f2a50d"/><circle cx="315.3" cy="775" r="0.7" fill="#007acc"/><rect x="314.5" y="777.6" width="1.7" height="8.2" fill="#eb9f0b"/><rect x="313.2" y="782" width="1.5" height="1.1" fill="#eb9f0b"/><rect x="313.2" y="784" width="1.5" height="1.1" fill="#eb9f0b"/>
<path d="M353.7 776.8 L348.7 772.4 V774.9 Q340.6 775.2 338.8 781.8 Q342.4 778.6 348.7 778.5 V781 Z" stroke="#ffffff" stroke-width="1.15" fill="none" stroke-linecap="round" stroke-linejoin="round" />
<circle cx="344.8" cy="784.6" r="2.0" stroke="#ffffff" stroke-width="1.15" fill="none"/>
<path d="M1177.8 780.6 L1181.4 784.3 L1189 775 M1183.2 781.9 L1185.8 784.3 L1193.4 775" stroke="#ffffff" stroke-width="1.1" fill="none" stroke-linecap="round" stroke-linejoin="round" />
<circle cx="1272.4" cy="778.8" r="2.3" stroke="#ffffff" stroke-width="1.1" fill="none"/>
<path d="M1267.7 786.3 Q1268.3 782.2 1272.4 782.2 Q1276.5 782.2 1277.1 786.3" stroke="#ffffff" stroke-width="1.1" fill="none" stroke-linecap="round" stroke-linejoin="round" />
<path d="M1271.2 775 V772.7 H1281.6 V780.2 H1278.6 M1277 778.8 L1278.4 780.2 L1280.6 777.6" stroke="#ffffff" stroke-width="1.1" fill="none" stroke-linecap="round" stroke-linejoin="round" />
<path d="M1305.2 784.6 H1316.2 Q1314.9 783 1314.9 780.4 M1306.5 784.4 Q1306.6 782 1306.6 777.6 Q1306.8 773 1310.8 772.7 M1309.6 785.6 Q1310.7 787.2 1311.9 785.6" stroke="#ffffff" stroke-width="1.1" fill="none" stroke-linecap="round" stroke-linejoin="round" />
<circle cx="1314.9" cy="775.8" r="3.0" stroke="none" stroke-width="0" fill="#ffffff"/>
<path d="M881.2 556 Q884 556 884.5 558 Q885 556 887.8 556 M884.5 558 V570 M881.2 572 Q884 572 884.5 570 Q885 572 887.8 572 M883.2 564.4 H885.9" stroke="#151515" stroke-width="2.6" fill="none" stroke-linecap="round" stroke-linejoin="round" />
<path d="M881.2 556 Q884 556 884.5 558 Q885 556 887.8 556 M884.5 558 V570 M881.2 572 Q884 572 884.5 570 Q885 572 887.8 572 M883.2 564.4 H885.9" stroke="#ffffff" stroke-width="1.15" fill="none" stroke-linecap="round" stroke-linejoin="round" /></svg>
</body></html>
